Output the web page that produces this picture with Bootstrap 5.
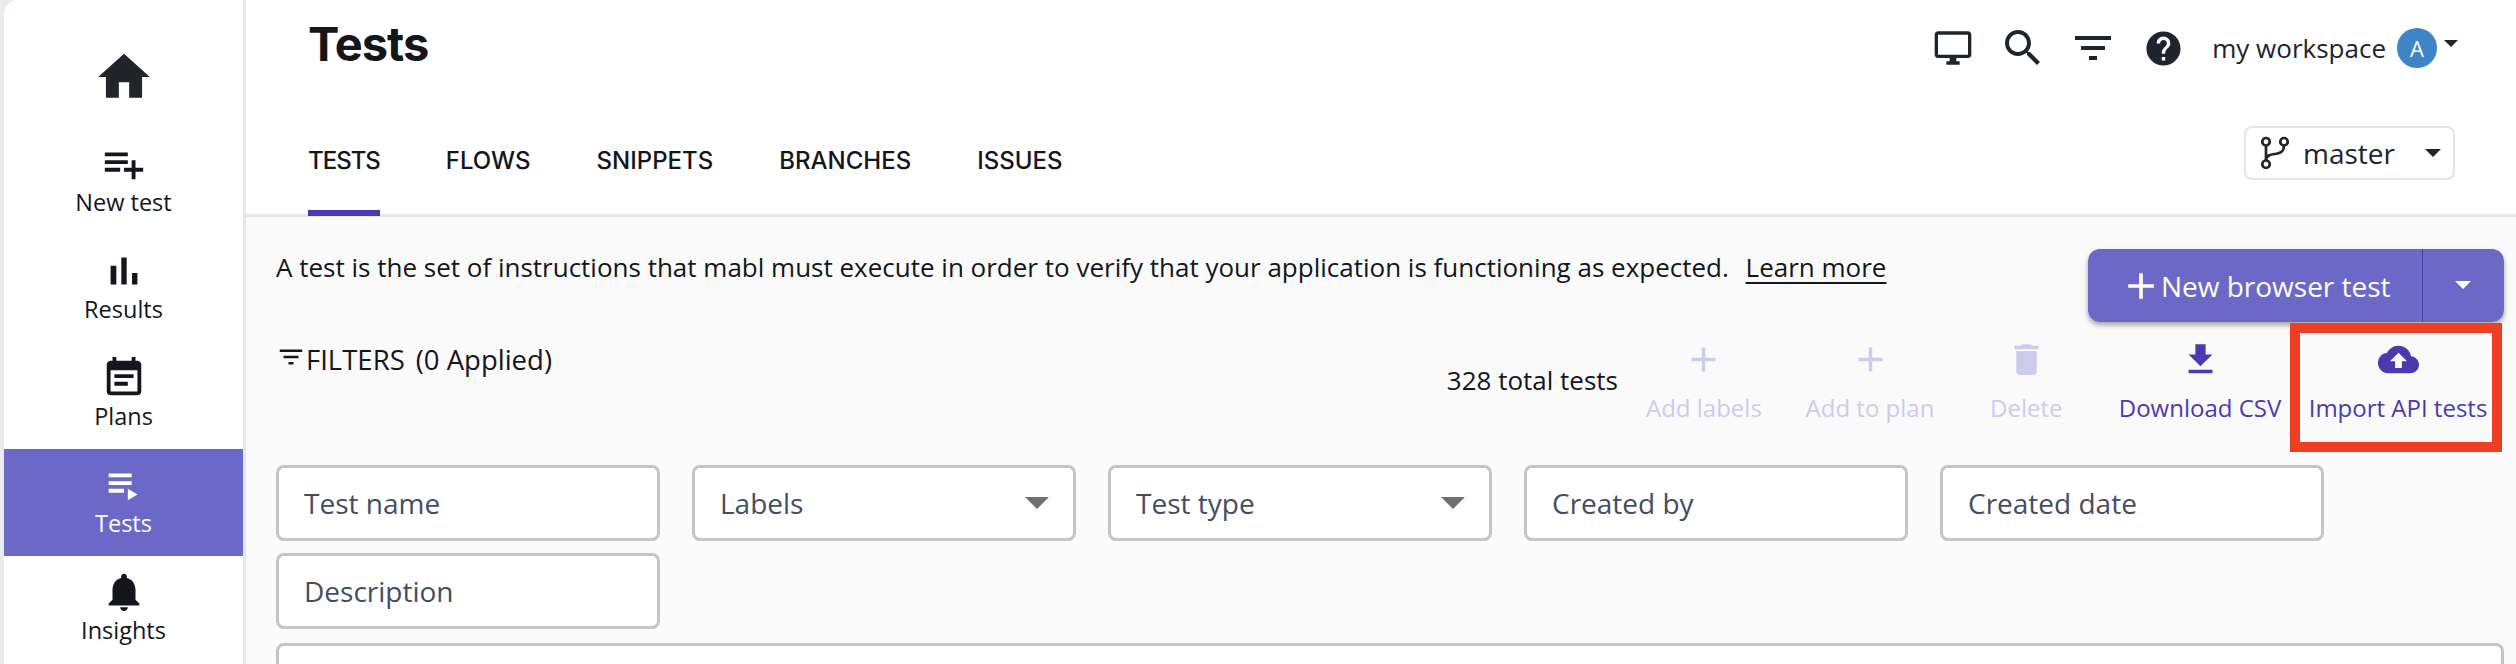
<!DOCTYPE html>
<html lang="en"><head><meta charset="utf-8"><title>Tests</title>
<link href="https://cdn.jsdelivr.net/npm/bootstrap@5.3.0/dist/css/bootstrap.min.css" rel="stylesheet">
<style>
html,body{height:664px;overflow:hidden;background:#fff}
body{font-family:"Open Sans","Liberation Sans",sans-serif;font-size:26px;color:#14161b}
.app-shell{height:664px;overflow:hidden;background:#ececf0}
.side-rail{flex:none;margin-left:4px;background:#fff;border-right:3px solid #e6e6ec;border-top-left-radius:14px;width:242px}
.rail-home{height:128px;padding-top:46px}
.rail-item{height:107px;color:#14161b;font-size:23.500px;line-height:30px;text-decoration:none;padding-top:13px}
.rail-item svg{width:46px;height:46px}
.rail-item.is-active{background:#6b68c8;color:#fff}
.rail-home svg{width:62px;height:62px}
svg{fill:currentColor;display:block}
.main-col{min-width:0;background:#fafafa}
.top-head{height:217px;background:#fff;border-bottom:3px solid #e6e6ec}
.page-h{font-family:Inter,"Liberation Sans",sans-serif;font-weight:700;font-size:47px;line-height:56px;margin:0;letter-spacing:-1px;color:#14161b}
.head-row{height:100px;padding:16px 58px 0 62px}
.top-ic{color:#20242c;margin-top:8px;height:48px}
.ic-40{width:40px;height:40px}
.ic-41{width:41px;height:41px}
.ic-48{width:48px;height:48px}
.gap-a{margin-left:26px}
.gap-b{margin-left:22px}
.tab-list{gap:66px;padding:44px 0 0 62px}
.tab-list .nav-link{font-family:Inter,"Liberation Sans",sans-serif;font-weight:500;font-size:24px;color:#14161b;padding:0 0 32px;border-bottom:6px solid transparent;line-height:34px}
.tab-list .nav-link.active{border-bottom-color:#4a3aad;letter-spacing:-1px}
.ws-label{margin-left:28px;color:#20242c}
.avatar-dot{width:40px;height:40px;background:#3d85c6;color:#fff;font-size:22px;margin-left:11px}
.tri-dn{width:0;height:0;border-left:7px solid transparent;border-right:7px solid transparent;border-top:7px solid currentColor}
.tri-top{margin:0 0 10px 7px}
.tri-lg{border-left-width:8px;border-right-width:8px;border-top-width:8px}
.branch-btn{width:211px;height:54px;margin:26px 61px 0 0;border:2px solid #e4e4ec;border-radius:8px;padding:0 12px 0 11px;color:#20242c;font-size:28px;background:#fff}
.branch-btn svg{width:36px;height:36px}
.branch-btn .branch-name{margin-left:10px}
.body-pad{padding:0 12px 0 30px}
.intro-line{height:107px;padding-top:32px;line-height:36px;white-space:nowrap}
.intro-line a{color:#14161b;text-underline-offset:5px;margin-left:10px}
.new-split{height:73px;width:416px;margin-top:32px;box-shadow:0 3px 5px rgba(0,0,0,.35);border-radius:12px}
.new-split .btn{background:#6b68c8;color:#fff;border:0;font-size:28px;border-radius:12px;white-space:nowrap}
.new-split .btn-main{width:335px;padding:0;border-top-right-radius:0;border-bottom-right-radius:0;border-right:2px solid #4a3aad}
.new-split .btn-more{width:81px;border-top-left-radius:0;border-bottom-left-radius:0}
.new-split svg{width:44px;height:44px;margin-right:-2px}
.tools-row{height:141px}
.filt-line{padding-top:16px;font-size:27.500px;line-height:40px}
.filt-ic{width:30px;height:30px;margin:2px 0 0 0}
.filt-count{margin-left:11px}
.acts{padding:14px 16px 0 0}
.act-btn{font-size:24px;color:#4a3aad;background:none;border:0;padding:0;line-height:30px;text-align:center;white-space:nowrap;height:85px}
.act-btn svg{width:41px;height:41px;margin:0 auto 13px}
.act-btn.is-off{color:#cdcbed}
.total-lbl{line-height:36px;margin:24px 28px 0 0}
.w-a{width:115px}
.w-b{width:130px;margin-left:44px}
.w-c{width:72px;margin-left:55px}
.w-d{width:164px;margin-left:56px}
.w-e{width:180px;margin-left:26px}
.filter-wrap{gap:12px 32px}
.filter-wrap .form-control,.filter-wrap .form-select{width:384px;height:76px;border:3px solid #c4c4c8;border-radius:8px;font-size:28px;padding:0 25px;color:#454c63;background-color:#fff}
.filter-wrap .form-control::placeholder{color:#454c63;opacity:1}
.filter-wrap .form-select{background-size:24px 12px;background-position:right 24px center;background-image:url("data:image/svg+xml,%3Csvg xmlns='http://www.w3.org/2000/svg' viewBox='0 0 24 12'%3E%3Cpath fill='%23707070' d='M0 0h24L12 12z'/%3E%3C/svg%3E")}
.result-box{height:120px;margin-top:14px;border:3px solid #c4c4c8;border-radius:8px;background:#fff}
.call-out{position:absolute;left:2290px;top:323px;width:212px;height:129px;border:10px solid #ee3f24;pointer-events:none}
</style></head>
<body>
<div class="app-shell d-flex position-relative">
  <nav class="side-rail d-flex flex-column align-items-stretch">
    <a class="rail-home d-flex justify-content-center text-dark" href="#" aria-label="Home"><svg viewBox="0 0 24 24"><path d="M10 20v-6h4v6h5v-8h3L12 3 2 12h3v8z"/></svg></a>
    <a class="rail-item d-flex flex-column align-items-center" href="#"><svg viewBox="0 0 24 24"><path d="M14 10H2v2h12v-2zm0-4H2v2h12V6zm4 8v-4h-2v4h-4v2h4v4h2v-4h4v-2h-4zM2 16h8v-2H2v2z"/></svg>New test</a>
    <a class="rail-item d-flex flex-column align-items-center" href="#"><svg viewBox="0 0 24 24"><path d="M5 9.200h3V19H5zM10.600 5h2.800v14h-2.800zm5.600 8H19v6h-2.800z"/></svg>Results</a>
    <a class="rail-item d-flex flex-column align-items-center" href="#"><svg viewBox="0 0 24 24"><path d="M17 10H7v2h10v-2zm2-7h-1V1h-2v2H8V1H6v2H5c-1.110 0-1.990.9-1.990 2L3 19c0 1.100.89 2 2 2h14c1.100 0 2-.9 2-2V5c0-1.100-.9-2-2-2zm0 16H5V8h14v11zm-5-5H7v2h7v-2z"/></svg>Plans</a>
    <a class="rail-item is-active d-flex flex-column align-items-center" href="#"><svg viewBox="0 0 24 24"><path d="M4 10h12v2H4zm0-4h12v2H4zm0 8h8v2H4zm10 0v6l5-3z"/></svg>Tests</a>
    <a class="rail-item d-flex flex-column align-items-center" href="#"><svg viewBox="0 0 24 24"><path d="M12 22c1.100 0 2-.9 2-2h-4c0 1.100.89 2 2 2zm6-6v-5c0-3.070-1.640-5.640-4.500-6.320V4c0-.83-.67-1.500-1.500-1.500s-1.500.67-1.500 1.500v.68C7.630 5.360 6 7.920 6 11v5l-2 2v1h16v-1l-2-2z"/></svg>Insights</a>
  </nav>
  <div class="main-col flex-grow-1 d-flex flex-column">
    <header class="top-head">
      <div class="head-row d-flex justify-content-between">
        <h1 class="page-h">Tests</h1>
        <div class="d-flex align-items-center top-ic">
          <svg class="ic-40" viewBox="0 0 24 24"><path d="M21 2H3c-1.100 0-2 .9-2 2v12c0 1.100.9 2 2 2h7v2H8v2h8v-2h-2v-2h7c1.100 0 2-.9 2-2V4c0-1.100-.9-2-2-2zm0 14H3V4h18v12z"/></svg>
          <svg class="ic-48 gap-a" viewBox="0 0 24 24"><path d="M15.500 14h-.79l-.28-.27C15.410 12.590 16 11.110 16 9.500 16 5.910 13.090 3 9.500 3S3 5.910 3 9.500 5.910 16 9.500 16c1.610 0 3.090-.59 4.230-1.570l.27.28v.79l5 4.990L20.490 19l-4.990-5zm-6 0C7.010 14 5 11.990 5 9.500S7.010 5 9.500 5 14 7.010 14 9.500 11.990 14 9.500 14z"/></svg>
          <svg class="ic-48 gap-b" viewBox="0 0 24 24"><path d="M10 18h4v-2h-4v2zM3 6v2h18V6H3zm3 7h12v-2H6v2z"/></svg>
          <svg class="ic-41 gap-a" viewBox="0 0 24 24"><path d="M12 2C6.480 2 2 6.480 2 12s4.480 10 10 10 10-4.480 10-10S17.520 2 12 2zm1 17h-2v-2h2v2zm2.070-7.750l-.9.92C13.450 12.900 13 13.500 13 15h-2v-.5c0-1.100.45-2.100 1.170-2.830l1.240-1.260c.37-.36.59-.86.59-1.410 0-1.100-.9-2-2-2s-2 .9-2 2H8c0-2.210 1.790-4 4-4s4 1.790 4 4c0 .88-.36 1.680-.93 2.250z"/></svg>
          <span class="ws-label">my workspace</span>
          <span class="avatar-dot rounded-circle d-flex align-items-center justify-content-center">A</span>
          <span class="tri-dn tri-top"></span>
        </div>
      </div>
      <div class="d-flex justify-content-between">
        <ul class="nav tab-list">
          <li class="nav-item"><a class="nav-link active" href="#">TESTS</a></li>
          <li class="nav-item"><a class="nav-link" href="#">FLOWS</a></li>
          <li class="nav-item"><a class="nav-link" href="#">SNIPPETS</a></li>
          <li class="nav-item"><a class="nav-link" href="#">BRANCHES</a></li>
          <li class="nav-item"><a class="nav-link" href="#">ISSUES</a></li>
        </ul>
        <button class="branch-btn d-flex align-items-center" type="button">
          <svg viewBox="0 0 24 24" fill="none"><g fill="none" stroke="currentColor" stroke-width="1.800"><circle cx="6" cy="4.500" r="2.500"/><circle cx="6" cy="19.500" r="2.500"/><circle cx="18" cy="4.500" r="2.500"/><path d="M6 7v10M18 7c0 4-2 5-5 5.500S6 13 6 17"/></g></svg>
          <span class="branch-name flex-grow-1 text-start">master</span>
          <span class="tri-dn tri-lg"></span>
        </button>
      </div>
    </header>
    <div class="body-pad flex-grow-1">
      <div class="d-flex justify-content-between">
        <div class="intro-line">A test is the set of instructions that mabl must execute in order to verify that your application is functioning as expected. <a href="#">Learn more</a></div>
        <div class="btn-group new-split">
          <button class="btn btn-main d-flex align-items-center justify-content-center" type="button"><svg viewBox="0 0 24 24"><path d="M19 13h-6v6h-2v-6H5v-2h6V5h2v6h6v2z"/></svg>New browser test</button>
          <button class="btn btn-more dropdown-toggle" type="button" aria-label="More"></button>
        </div>
      </div>
      <div class="tools-row d-flex justify-content-between">
        <div class="filt-line d-flex align-items-start"><svg class="filt-ic" viewBox="0 0 24 24"><path d="M10 18h4v-2h-4v2zM3 6v2h18V6H3zm3 7h12v-2H6v2z"/></svg><span>FILTERS</span><span class="filt-count">(0 Applied)</span></div>
        <div class="d-flex acts align-items-start">
          <span class="total-lbl">328 total tests</span>
          <button class="act-btn w-a is-off" type="button"><svg viewBox="0 0 24 24"><path d="M19 13h-6v6h-2v-6H5v-2h6V5h2v6h6v2z"/></svg>Add labels</button>
          <button class="act-btn w-b is-off" type="button"><svg viewBox="0 0 24 24"><path d="M19 13h-6v6h-2v-6H5v-2h6V5h2v6h6v2z"/></svg>Add to plan</button>
          <button class="act-btn w-c is-off" type="button"><svg viewBox="0 0 24 24"><path d="M6 19c0 1.100.9 2 2 2h8c1.100 0 2-.9 2-2V7H6v12zM19 4h-3.500l-1-1h-5l-1 1H5v2h14V4z"/></svg>Delete</button>
          <button class="act-btn w-d" type="button"><svg viewBox="0 0 24 24"><path d="M19 9h-4V3H9v6H5l7 7 7-7zM5 18v2h14v-2H5z"/></svg>Download CSV</button>
          <button class="act-btn w-e" type="button"><svg viewBox="0 0 24 24"><path d="M19.350 10.040C18.670 6.590 15.640 4 12 4 9.110 4 6.600 5.640 5.350 8.040 2.340 8.360 0 10.910 0 14c0 3.310 2.690 6 6 6h13c2.760 0 5-2.240 5-5 0-2.640-2.050-4.780-4.650-4.960zM14 13v4h-4v-4H7l5-5 5 5h-3z"/></svg>Import API tests</button>
        </div>
      </div>
      <div class="filter-wrap d-flex flex-wrap">
        <input class="form-control" placeholder="Test name">
        <select class="form-select"><option>Labels</option></select>
        <select class="form-select"><option>Test type</option></select>
        <input class="form-control" placeholder="Created by">
        <input class="form-control" placeholder="Created date">
        <input class="form-control" placeholder="Description">
      </div>
      <div class="result-box"></div>
    </div>
  </div>
  <div class="call-out"></div>
</div>
<script src="https://cdn.jsdelivr.net/npm/bootstrap@5.3.0/dist/js/bootstrap.bundle.min.js"></script>
</body></html>
